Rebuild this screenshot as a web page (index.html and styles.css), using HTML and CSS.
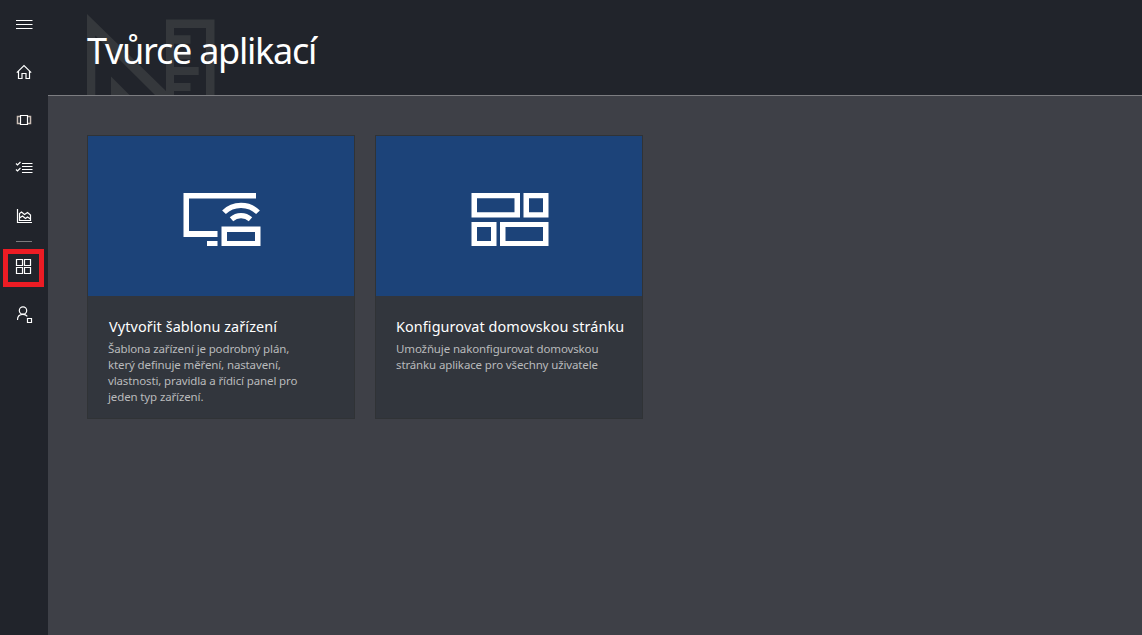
FILE: index.html
```
<!DOCTYPE html>
<html lang="cs">
<head>
<meta charset="utf-8">
<title>Tvůrce aplikací</title>
<link rel="stylesheet" href="styles.css">
</head>
<body>
<div class="app">
  <nav class="sidebar">
    <a class="nav-item"><svg viewBox="0 0 48 48"><path d="M16 20.5h16.5M16 24.5h16.5M16 28.5h16.5"/></svg></a>
    <a class="nav-item"><svg viewBox="0 0 48 48"><path d="M16.800 24.600L24 17.600l7.200 7M18.500 23v7.500h3.500v-5h4v5h3.500V23"/></svg></a>
    <a class="nav-item"><svg viewBox="0 0 48 48"><path d="M20.500 19.500h7v9h-7z"/><path class="dim" d="M20 20.500h-2.500v7H20M28 20.500h2.500v7H28"/></svg></a>
    <a class="nav-item"><svg viewBox="0 0 48 48"><path d="M22 19.500h10.500M22 22.500h10.500M22 25.500h10.500M22 28.500h10.500M16 19.500l1.500 1.500 3-3M16 25.500l1.500 1.500 3-3"/></svg></a>
    <a class="nav-item"><svg viewBox="0 0 48 48"><path d="M17.500 17v13.500H32M19.500 28.500v-7l2-1.500 3 2.500 3-2 3 2.500v5.500zM19.500 26l3-2 3 2.500 2-1.500 3 2"/></svg></a>
    <div class="divider"></div>
    <a class="nav-item selected"><svg viewBox="0 0 48 48"><path d="M16.500 16.500h6v6h-6zM24.500 16.500h6v6h-6zM16.500 24.500h6v6h-6zM24.500 24.500h6v6h-6z"/></svg></a>
    <a class="nav-item"><svg viewBox="0 0 48 48"><circle cx="23" cy="19.500" r="3.700"/><path d="M17.500 29c0-3.500 2.300-5.700 5.500-5.700 1.800 0 3.300.7 4.300 2M27.500 27.500h4v4h-4z"/></svg></a>
  </nav>
  <div class="page">
    <header class="header">
      <svg class="emblem" viewBox="87 13 128 82"><path d="M87 14L166 91V19.500h48.500V95h-8.500V28h-32v7.300h16.500v8.500H174v7h16.500v8.500H174v7.700h24.700v8H174v8h16.500v8H174v4h-19L95.300 35.500V95H87zM111 76.500L129.500 95H111z"/></svg>
      <h1 class="title">Tvůrce aplikací</h1>
    </header>
    <main class="cards">
      <article class="card">
        <div class="tile"><svg viewBox="170 180 100 76"><path d="M183.500 193H256v5.500h-67V231h28.500v6h-34zM207 241h10.500v5H207zM221.500 226.500h39v19.500h-39zm5.500 5.500v9h28v-9z"/><path class="wave" d="M224 212.300c9-9.300 25-9.300 34 0M231.500 219.200c5.500-4.800 13.500-4.800 19 0"/></svg></div>
        <div class="body">
          <h2 class="name name-template">Vytvořit šablonu zařízení</h2>
          <p class="text">Šablona zařízení je podrobný plán,<br>který definuje měření, nastavení,<br>vlastnosti, pravidla a řídicí panel pro<br>jeden typ zařízení.</p>
        </div>
      </article>
      <article class="card">
        <div class="tile"><svg viewBox="458 180 100 76"><path d="M471.500 193H520v24.500h-48.500zm5.500 5.300v14h37.500v-14zM523.500 193h25v24.500h-25zm5.500 5.300v14h14v-14zM471.500 222h25v24h-25zm5.500 5v14h14v-14zM500 222h48.500v24H500zm5.500 5v14h37.500v-14z"/></svg></div>
        <div class="body">
          <h2 class="name">Konfigurovat domovskou stránku</h2>
          <p class="text">Umožňuje nakonfigurovat domovskou<br>stránku aplikace pro všechny uživatele</p>
        </div>
      </article>
    </main>
  </div>
</div>
</body>
</html>
```
FILE: styles.css
```
* { box-sizing: border-box; }
body { margin: 0; font-family: "Noto Sans", "Open Sans", sans-serif; color: #fff; }
.app { display: flex; height: 635px; background: #3e4047; overflow: hidden; }
.sidebar { width: 48px; background: #21242b; flex: none; }
.nav-item { display: block; height: 48px; position: relative; }
.nav-item svg { display: block; width: 48px; height: 48px; fill: none; stroke: #fff; stroke-width: 1.2; }
.nav-item .dim { stroke: #c9bdb5; stroke-width: 1.5; }
.divider { height: 1px; width: 16px; margin: 1px auto; background: #7b7b7e; }
.selected::after { content: ""; box-sizing: border-box; position: absolute; left: 3px; top: 6px; width: 41px; height: 38px; border: 5px solid #ed1c24; }
.page { flex: 1; }
.header { height: 96px; padding: 26px 0 0 39px; background: #21242b; border-bottom: 1px solid #7c7d81; position: relative; }
.emblem { position: absolute; left: 39px; top: 13px; width: 128px; height: 82px; fill: #35383c; }
.title { position: relative; margin: 0; font-size: 36px; line-height: 49px; font-weight: 400; letter-spacing: -1.25px; white-space: nowrap; }
.cards { display: flex; gap: 20px; padding: 39px; }
.card { width: 268px; height: 284px; background: #32363d; border: 1px solid #303336; }
.tile { height: 160px; padding: 44px 0 0 82px; background: #1c4379; }
.tile svg { display: block; width: 100px; height: 76px; fill: #fff; }
.tile .wave { fill: none; stroke: #fff; stroke-width: 5.2; }
.body { padding: 20px 0 0 20px; }
.name { margin: 0; font-size: 14.400px; line-height: 22px; font-weight: 400; letter-spacing: 0.1px; white-space: nowrap; }
.name-template { padding-left: 1px; }
.text { margin: 3px 0 0; font-size: 11.500px; line-height: 16px; color: #b9babc; letter-spacing: -0.13px; white-space: nowrap; }
```
